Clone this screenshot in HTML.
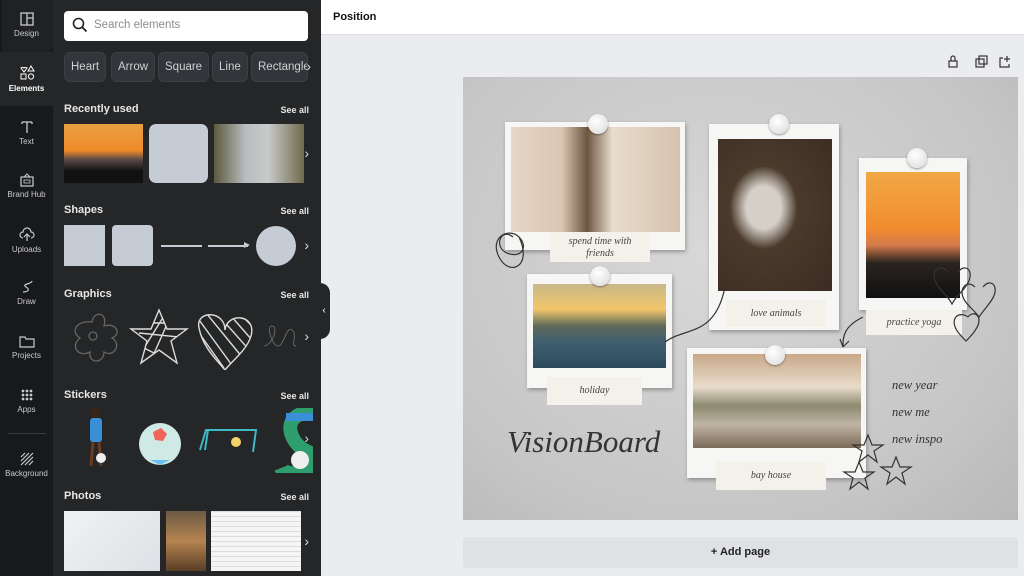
<!DOCTYPE html>
<html><head><meta charset="utf-8"><style>
*{margin:0;padding:0;box-sizing:border-box}
body{width:1024px;height:576px;overflow:hidden;background:#ebecf0;font-family:"Liberation Sans",sans-serif;position:relative}
.a{position:absolute}
#rail{left:0;top:0;width:53px;height:576px;background:#18191b}
.ri{position:absolute;left:0;width:53px;text-align:center;color:#c9cacd;font-size:8px}
.ri svg{display:block;margin:0 auto 3px}
#panel{left:53px;top:0;width:268px;height:576px;background:#252627}
.h{color:#e6e6e6;font-size:11px;font-weight:bold;position:absolute;left:11px}
.s{color:#e6e6e6;font-size:9px;font-weight:bold;position:absolute;right:12px}
.chip{position:absolute;top:52px;height:30px;border-radius:6px;background:#33353a;border:1px solid #3d3f44;color:#cfd0d3;font-size:11.5px;line-height:28px;padding:0 6px}
.sh{background:#c5ccd6}
.arr{color:#ddd;font-size:14px;position:absolute;right:12px}
.frame{background:#f6f6f4;box-shadow:1px 2px 4px rgba(0,0,0,.3)}
.pin{width:20px;height:20px;border-radius:50%;background:radial-gradient(circle at 40% 35%,#fff,#d8d8d8);box-shadow:0 1px 2px rgba(0,0,0,.4)}
.lab{background:#f3f1ea;font-family:"Liberation Serif",serif;font-style:italic;color:#444;font-size:10px;text-align:center}
.hw{font-family:"Liberation Serif",serif;font-style:italic;color:#333}
</style></head><body>
<div id="rail" class="a">
<div class="a" style="left:2px;top:0;width:51px;height:52px;background:#202124;border-radius:0 0 8px 0"></div>
<div class="ri" style="top:12px"><svg width="14" height="14"><rect x="1" y="1" width="12" height="12" fill="none" stroke="#c9cacd" stroke-width="1.3"/><path d="M7 1v12M7 6h6" stroke="#c9cacd" stroke-width="1.3"/></svg>Design</div>
<div class="a" style="left:0;top:52px;width:53px;height:54px;background:#252627"></div>
<div class="ri" style="top:65px;color:#fff;font-weight:bold"><svg width="16" height="16"><path d="M2 3a2 2 0 0 1 3 0a2 2 0 0 1 3 0L5 7z" fill="none" stroke="#fff"/><path d="M12 1l3 5h-6z" fill="none" stroke="#fff"/><rect x="2" y="9" width="5" height="5" fill="none" stroke="#fff"/><circle cx="12" cy="11.5" r="2.6" fill="none" stroke="#fff"/></svg>Elements</div>
<div class="ri" style="top:120px"><svg width="14" height="14"><path d="M2 2h10M7 2v11M2 2v2M12 2v2" stroke="#c9cacd" stroke-width="1.3" fill="none"/></svg>Text</div>
<div class="ri" style="top:172px"><svg width="14" height="15"><rect x="1" y="5" width="12" height="9" fill="none" stroke="#c9cacd" stroke-width="1.2"/><path d="M4 5l3-3 3 3" stroke="#c9cacd" fill="none"/><rect x="4" y="8" width="6" height="3" fill="none" stroke="#c9cacd" stroke-width=".8"/></svg>Brand Hub</div>
<div class="ri" style="top:227px"><svg width="16" height="15"><path d="M4 11a3 3 0 0 1 0-6a4 4 0 0 1 8 0a3 3 0 0 1 0 6M8 14V7M5 10l3-3 3 3" stroke="#c9cacd" fill="none" stroke-width="1.2"/></svg>Uploads</div>
<div class="ri" style="top:280px"><svg width="14" height="14"><path d="M3 12c4 0 8-2 3-5s6-3 6-6" stroke="#c9cacd" fill="none" stroke-width="1.2"/></svg>Draw</div>
<div class="ri" style="top:334px"><svg width="16" height="14"><path d="M1 3h5l1 2h8v8H1z" stroke="#c9cacd" fill="none" stroke-width="1.2"/></svg>Projects</div>
<div class="ri" style="top:388px"><svg width="14" height="14" fill="#c9cacd"><circle cx="3" cy="3" r="1.4"/><circle cx="7" cy="3" r="1.4"/><circle cx="11" cy="3" r="1.4"/><circle cx="3" cy="7" r="1.4"/><circle cx="7" cy="7" r="1.4"/><circle cx="11" cy="7" r="1.4"/><circle cx="3" cy="11" r="1.4"/><circle cx="7" cy="11" r="1.4"/><circle cx="11" cy="11" r="1.4"/></svg>Apps</div>
<div class="a" style="left:8px;top:433px;width:38px;height:1px;background:#3a3b3e"></div>
<div class="ri" style="top:452px"><svg width="14" height="14"><path d="M1 5l4-4M1 9l8-8M1 13l12-12M5 13l8-8M9 13l4-4" stroke="#c9cacd" stroke-width="1.2"/></svg>Background</div>
</div>
<div id="panel" class="a">
<div class="a" style="left:11px;top:11px;width:244px;height:30px;background:#fff;border-radius:4px"></div>
<svg class="a" style="left:19px;top:17px" width="16" height="16"><circle cx="6.5" cy="6.5" r="5" stroke="#222" stroke-width="1.6" fill="none"/><path d="M10 10l4.5 4.5" stroke="#222" stroke-width="1.8"/></svg>
<div class="a" style="left:41px;top:19px;color:#8a8c90;font-size:11.5px">Search elements</div>
<div class="chip" style="left:11px">Heart</div>
<div class="chip" style="left:58px">Arrow</div>
<div class="chip" style="left:105px">Square</div>
<div class="chip" style="left:159px">Line</div>
<div class="chip" style="left:198px;width:57px;overflow:hidden">Rectangle</div>
<div class="arr" style="top:58px;right:10px">›</div>
<div class="h" style="top:103px">Recently used</div><div class="s" style="top:105px">See all</div>
<div class="a" style="left:11px;top:124px;width:79px;height:59px;background:linear-gradient(#e9a040,#f08a2a 45%,#5a4a48 60%,#111 80%)"></div>
<div class="a sh" style="left:96px;top:124px;width:59px;height:59px;border-radius:7px"></div>
<div class="a" style="left:161px;top:124px;width:90px;height:59px;background:linear-gradient(90deg,#5c5a3e,#b9bcbe 35%,#c8cacb 60%,#6f6a4b)"></div>
<div class="arr" style="top:145px">›</div>
<div class="h" style="top:204px">Shapes</div><div class="s" style="top:206px">See all</div>
<div class="a sh" style="left:11px;top:225px;width:41px;height:41px"></div>
<div class="a sh" style="left:59px;top:225px;width:41px;height:41px;border-radius:4px"></div>
<div class="a" style="left:108px;top:245px;width:41px;height:1.5px;background:#c5ccd6"></div>
<div class="a" style="left:155px;top:245px;width:40px;height:1.5px;background:#c5ccd6"></div>
<div class="a" style="left:191px;top:242px;width:0;height:0;border-left:6px solid #c5ccd6;border-top:3.5px solid transparent;border-bottom:3.5px solid transparent"></div>
<div class="a sh" style="left:203px;top:226px;width:40px;height:40px;border-radius:50%"></div>
<div class="arr" style="top:237px">›</div>
<div class="h" style="top:288px">Graphics</div><div class="s" style="top:290px">See all</div>
<svg class="a" style="left:11px;top:308px" width="240" height="62"><defs><clipPath id="hc"><path d="M135 20c-4-18 26-18 26 2c2-18 32-16 26 6c-4 14-20 26-26 34c-8-10-22-22-26-42z"/></clipPath><clipPath id="sc"><path d="M95 2l8 19 20 0-16 12 6 22-18-13-18 13 6-22-16-12 20 0z"/></clipPath></defs><g fill="none" stroke="#666" stroke-width="1.3"><path d="M28 14c2-12 16-10 12 4c12-4 18 8 8 12c10 6 2 20-8 14c0 12-16 12-14 0c-12 6-20-6-10-14c-10-6-4-18 12-16z"/><circle cx="29" cy="28" r="4"/></g><g fill="none" stroke="#ddd" stroke-width="1.4"><path d="M95 2l8 19 20 0-16 12 6 22-18-13-18 13 6-22-16-12 20 0z"/><g clip-path="url(#sc)"><path d="M75 15l50 0M75 25l50 5M80 40l25-40M88 50l20-45M70 35l40 20"/></g><path d="M135 20c-4-18 26-18 26 2c2-18 32-16 26 6c-4 14-20 26-26 34c-8-10-22-22-26-42z"/><g clip-path="url(#hc)"><path d="M130 5l40 55M138 0l45 55M148 0l40 45M160 0l35 40M130 18l30 42M170 0l25 25"/></g></g><path d="M200 38c10-2 14-20 8-20s0 20 6 20 8-20 14-16-2 16 4 16" stroke="#666" fill="none"/></svg>
<div class="arr" style="top:328px">›</div>
<div class="h" style="top:389px">Stickers</div><div class="s" style="top:391px">See all</div>
<svg class="a" style="left:25px;top:408px" width="235" height="65"><circle cx="17" cy="5" r="5" fill="#3a2416"/><rect x="12" y="10" width="12" height="24" rx="3" fill="#3a8fd8"/><path d="M15 34l-2 24M21 34l2 24" stroke="#6b3b20" stroke-width="3"/><circle cx="23" cy="50" r="5" fill="#eee"/><circle cx="82" cy="36" r="21" fill="#cfeae5"/><path d="M75 24l8-4 6 6-4 7-8-1z" fill="#f0645a"/><path d="M72 52l10 5 10-5z" fill="#6bc0f0"/><path d="M122 42l6-20h50l-3 22M130 22l-3 20" stroke="#3fb8c6" stroke-width="2" fill="none"/><circle cx="158" cy="34" r="5" fill="#f5d36a"/><path d="M245 10c-20-12-40 0-30 20s30 10 20 30c-10 10-30 5-32 0" stroke="#2e9e6e" stroke-width="14" fill="none"/><circle cx="222" cy="52" r="9" fill="#eee"/><rect x="208" y="5" width="30" height="8" fill="#3a8fd8"/></svg>
<div class="arr" style="top:430px">›</div>
<div class="h" style="top:490px">Photos</div><div class="s" style="top:492px">See all</div>
<div class="a" style="left:11px;top:511px;width:96px;height:60px;background:linear-gradient(135deg,#f0f2f4,#dde1e5)"></div>
<div class="a" style="left:113px;top:511px;width:40px;height:60px;background:linear-gradient(#6d5a45,#b58450 50%,#5a3e28)"></div>
<div class="a" style="left:158px;top:511px;width:90px;height:60px;background:repeating-linear-gradient(0deg,#f5f5f5 0 4px,#ddd 4px 5px),#f5f5f5"></div>
<div class="arr" style="top:533px">›</div>
</div>
<div class="a" style="left:318px;top:283px;width:12px;height:56px;background:#252627;border-radius:0 10px 10px 0;color:#fff;font-size:10px;line-height:56px;text-align:center">‹</div>
<div class="a" style="left:321px;top:0;width:703px;height:35px;background:#fff;border-bottom:1px solid #dcdde0"></div>
<div class="a" style="left:333px;top:11px;font-size:11px;font-weight:bold;color:#111">Position</div>
<svg class="a" style="left:946px;top:55px" width="70" height="14"><g fill="none" stroke="#333" stroke-width="1.2"><rect x="3" y="6" width="8" height="6"/><path d="M5 6V3a2 2 0 0 1 4 0v3"/><rect x="30" y="4" width="8" height="8"/><rect x="33" y="1" width="8" height="8"/><path d="M57 3h-3v9h9v-3M61 1v6M58 4h6"/></g></svg>
<div class="a" style="left:463px;top:77px;width:555px;height:443px;background:radial-gradient(ellipse at 45% 40%,#d8d8d8,#c6c6c6 70%,#b8b8b8)"></div>
<div class="a frame" style="left:505px;top:122px;width:180px;height:128px"></div>
<div class="a" style="left:511px;top:127px;width:169px;height:105px;background:linear-gradient(90deg,#e6d6c6,#d9c7b4 30%,#6e5640 45%,#e8dccd 60%,#d6c2ae)"></div>
<div class="a frame" style="left:709px;top:124px;width:130px;height:206px"></div>
<div class="a" style="left:718px;top:139px;width:114px;height:152px;background:radial-gradient(ellipse at 40% 45%,#d5cfc8 0 18%,#4a3a2c 35%,#3a2c22)"></div>
<div class="a frame" style="left:859px;top:158px;width:108px;height:152px"></div>
<div class="a" style="left:866px;top:172px;width:94px;height:126px;background:linear-gradient(#f1a845,#f28c30 45%,#d47a4a 58%,#2a2420 72%,#111)"></div>
<div class="a frame" style="left:527px;top:274px;width:145px;height:114px"></div>
<div class="a" style="left:533px;top:284px;width:133px;height:84px;background:linear-gradient(#c9b78a,#f2c66a 30%,#5d6a5a 50%,#3f5f70 70%,#2c4a5c)"></div>
<div class="a frame" style="left:687px;top:348px;width:179px;height:130px"></div>
<div class="a" style="left:693px;top:354px;width:168px;height:94px;background:linear-gradient(#c8a888,#e8dccb 35%,#8c8a70 55%,#bfb4a4 75%,#7a6a58)"></div>
<div class="a pin" style="left:588px;top:114px"></div>
<div class="a pin" style="left:769px;top:114px"></div>
<div class="a pin" style="left:907px;top:148px"></div>
<div class="a pin" style="left:590px;top:266px"></div>
<div class="a pin" style="left:765px;top:345px"></div>
<div class="a lab" style="left:550px;top:232px;width:100px;height:30px;padding-top:4px;line-height:12px">spend time with<br>friends</div>
<div class="a lab" style="left:726px;top:300px;width:100px;height:27px;line-height:27px">love animals</div>
<div class="a lab" style="left:866px;top:310px;width:96px;height:25px;line-height:25px">practice yoga</div>
<div class="a lab" style="left:547px;top:377px;width:95px;height:28px;line-height:28px">holiday</div>
<div class="a lab" style="left:716px;top:462px;width:110px;height:28px;line-height:28px">bay house</div>
<div class="a hw" style="left:507px;top:424px;font-size:31px">VisionBoard</div>
<div class="a hw" style="left:892px;top:372px;font-size:12.5px;line-height:27px">new year<br>new me<br>new inspo</div>
<svg class="a" style="left:463px;top:77px" width="555" height="443"><g fill="none" stroke="#333" stroke-width="1.2"><path d="M50 160c-12-10-20 10-6 16s22-6 12-16-30 0-20 20 34 10 20-20"/><path d="M262 210c-10 50-40 40-60 55"/><path d="M400 240c-20 10-20 20-20 30M380 270l-3-8M380 270l6-6"/><path d="M495 195c8-10 18 0 8 14-4 6-10 10-14 18-4-8-10-12-14-18-10-14 2-24 10-14"/><path d="M520 210c8-10 18 0 8 14-4 6-8 10-12 16-4-6-10-10-14-16-8-12 2-22 10-14"/><path d="M505 240c6-8 16 0 8 12-2 4-6 8-10 12-4-4-8-8-10-12-6-12 4-18 12-12"/><path d="M405 358l4 10 11 0-9 6 3 11-9-7-9 7 3-11-9-6 11 0z"/><path d="M433 380l4 10 11 0-9 6 3 11-9-7-9 7 3-11-9-6 11 0z"/><path d="M396 385l4 10 11 0-9 6 3 11-9-7-9 7 3-11-9-6 11 0z"/></g></svg>
<div class="a" style="left:463px;top:537px;width:555px;height:31px;background:#dfe1e5;border-radius:3px;text-align:center;line-height:31px;font-size:11px;font-weight:bold;color:#222">+ Add page</div>
</body></html>
